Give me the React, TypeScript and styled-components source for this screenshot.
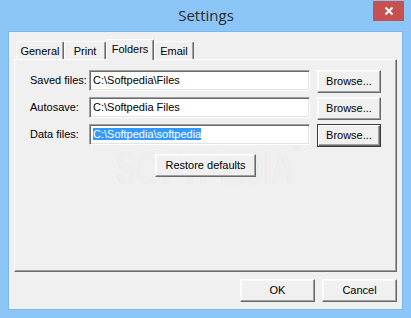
import React from "react";
import styled, { createGlobalStyle } from "styled-components";

const Global = createGlobalStyle`
  html, body { margin: 0; padding: 0; }
  body { width: 411px; height: 318px; overflow: hidden; font-family: "Liberation Sans", Arial, sans-serif; }
`;

const Window = styled.div`
  width: 411px;
  height: 318px;
  box-sizing: border-box;
  background: #8cc5f8;
  display: flex;
  flex-direction: column;
  padding: 0 8px 8px 8px;
`;

const TitleBar = styled.div`
  height: 31px;
  display: grid;
  grid-template-columns: 1fr auto 1fr;
  margin: 0 -1px 0 0;
`;

const Title = styled.div`
  grid-column: 2;
  align-self: center;
  font-family: "Open Sans", "Noto Sans", sans-serif;
  font-size: 15px;
  color: #2b2b2b;
  margin-top: -1px;
`;

const CloseButton = styled.div`
  grid-column: 3;
  justify-self: end;
  align-self: start;
  margin-top: 1px;
  width: 31px;
  height: 20px;
  background: #c75050;
  display: flex;
  align-items: center;
  justify-content: center;
`;

const Client = styled.div`
  flex: 1;
  background: #f0f0f0;
  border: 1px solid #7ab5ec;
  display: flex;
  flex-direction: column;
  padding: 7px 5px 7px 5px;
  font-size: 11px;
  color: #000;
`;

const TabStrip = styled.div`
  display: flex;
  height: 20px;
  align-items: flex-end;
  padding-left: 2px;
  position: relative;
  z-index: 1;
`;

const Tab = styled.div<{ $w: number; $active?: boolean }>`
  box-sizing: border-box;
  width: ${(p) => p.$w}px;
  height: ${(p) => (p.$active ? 21 : 18)}px;
  margin-bottom: ${(p) => (p.$active ? -1 : 0)}px;
  background: #f0f0f0;
  border-top: 1px solid #fff;
  border-left: 1px solid #fff;
  border-right: 1px solid #696969;
  border-top-left-radius: 2px;
  border-top-right-radius: 2px;
  box-shadow: inset -1px 0 #a0a0a0;
  display: flex;
  justify-content: center;
  padding-top: 3px;
  line-height: 13px;
`;

const Panel = styled.div`
  flex: 1;
  box-sizing: border-box;
  border-top: 1px solid #fff;
  border-left: 1px solid #fff;
  border-right: 1px solid #696969;
  border-bottom: 1px solid #696969;
  box-shadow: inset -1px -1px #a0a0a0;
  display: flex;
  flex-direction: column;
  align-items: center;
  padding: 10px 15px 0 15px;
  position: relative;
`;

const Rows = styled.div`
  align-self: stretch;
  display: flex;
  flex-direction: column;
  gap: 4px;
  position: relative;
  z-index: 1;
`;

const Row = styled.div`
  display: flex;
  align-items: flex-start;
  height: 23px;
`;

const Label = styled.div`
  width: 59px;
  line-height: 21px;
`;

const Field = styled.div`
  box-sizing: border-box;
  width: 221px;
  height: 21px;
  background: #fff;
  border: 1px solid;
  border-color: #a0a0a0 #fff #fff #a0a0a0;
  box-shadow: inset 1px 1px #696969, inset -1px -1px #e3e3e3;
  padding: 3px 0 0 3px;
  line-height: 13px;
  white-space: nowrap;
  overflow: hidden;
`;

const Selected = styled.span`
  background: #3399ff;
  color: #fff;
`;

const Button = styled.div<{ $w: number; $default?: boolean }>`
  box-sizing: border-box;
  width: ${(p) => p.$w}px;
  height: 23px;
  background: #f0f0f0;
  display: flex;
  align-items: center;
  justify-content: center;
  border: 1px solid;
  border-color: ${(p) => (p.$default ? "#3a3a3a" : "#fff #696969 #696969 #fff")};
  box-shadow: ${(p) =>
    p.$default
      ? "inset 1px 1px #fff, inset -1px -1px #696969, inset -2px -2px #a0a0a0"
      : "inset -1px -1px #a0a0a0, inset 1px 1px #f8f8f8"};
  padding-bottom: 1px;
`;

const BrowseButton = styled(Button)`
  margin-left: 7px;
`;

const RestoreButton = styled(Button)`
  margin-top: 7px;
  position: relative;
  z-index: 1;
`;

const Footer = styled.div`
  display: flex;
  justify-content: flex-end;
  gap: 7px;
  padding-top: 7px;
`;

const Watermark = styled.div`
  position: absolute;
  z-index: 0;
  left: 101px;
  top: 81px;
  font-family: "Liberation Sans", Arial, sans-serif;
  font-weight: bold;
  font-size: 46px;
  letter-spacing: -1px;
  transform: scaleX(0.7);
  transform-origin: left top;
  color: rgba(255, 255, 255, 0.65);
  text-shadow: 0 0 1px rgba(0, 0, 0, 0.12);
  pointer-events: none;
  white-space: nowrap;
`;

const Reg = styled.span`
  font-size: 12px;
  vertical-align: top;
  font-weight: normal;
`;

export default function App() {
  return (
    <>
      <Global />
      <Window>
        <TitleBar>
          <Title>Settings</Title>
          <CloseButton>
            <svg width="10" height="10" viewBox="0 0 10 10">
              <path d="M1.5 1.5 L8.5 8.5 M8.5 1.5 L1.5 8.5" stroke="#fff" strokeWidth="2" />
            </svg>
          </CloseButton>
        </TitleBar>
        <Client>
          <TabStrip>
            <Tab $w={48}>General</Tab>
            <Tab $w={42}>Print</Tab>
            <Tab $w={48} $active>Folders</Tab>
            <Tab $w={40}>Email</Tab>
          </TabStrip>
          <Panel>
            <Watermark>
              SOFTPEDIA<Reg>®</Reg>
            </Watermark>
            <Rows>
              <Row>
                <Label>Saved files:</Label>
                <Field>C:\Softpedia\Files</Field>
                <BrowseButton $w={64}>Browse...</BrowseButton>
              </Row>
              <Row>
                <Label>Autosave:</Label>
                <Field>C:\Softpedia Files</Field>
                <BrowseButton $w={64}>Browse...</BrowseButton>
              </Row>
              <Row>
                <Label>Data files:</Label>
                <Field>
                  <Selected>C:\Softpedia\softpedia</Selected>
                </Field>
                <BrowseButton $w={64} $default>Browse...</BrowseButton>
              </Row>
            </Rows>
            <RestoreButton $w={101}>Restore defaults</RestoreButton>
          </Panel>
          <Footer>
            <Button $w={75}>OK</Button>
            <Button $w={75}>Cancel</Button>
          </Footer>
        </Client>
      </Window>
    </>
  );
}
